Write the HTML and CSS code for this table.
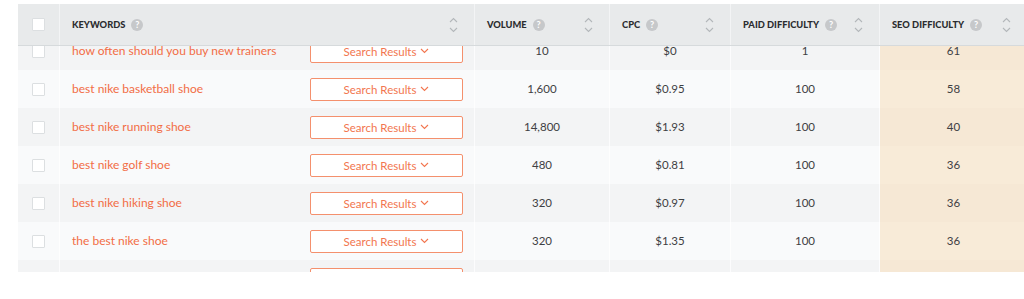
FILE: index.html
```html
<!DOCTYPE html>
<html>
<head>
<meta charset="utf-8">
<link rel="stylesheet" href="styles.css">
</head>
<body>
<div class="page">
  <div class="table">
    <div class="thead">
      <div class="th th-check"><span class="box"></span></div>
      <div class="th"><span class="label">Keywords</span><span class="help">?</span><span class="sort"><svg width="9" height="16" viewBox="0 0 9 16"><path d="M1 5 L4.5 1.5 L8 5" /><path d="M1 11 L4.5 14.5 L8 11" /></svg></span></div>
      <div class="th"><span class="label">Volume</span><span class="help">?</span><span class="sort"><svg width="9" height="16" viewBox="0 0 9 16"><path d="M1 5 L4.5 1.5 L8 5" /><path d="M1 11 L4.5 14.5 L8 11" /></svg></span></div>
      <div class="th"><span class="label">CPC</span><span class="help">?</span><span class="sort"><svg width="9" height="16" viewBox="0 0 9 16"><path d="M1 5 L4.5 1.5 L8 5" /><path d="M1 11 L4.5 14.5 L8 11" /></svg></span></div>
      <div class="th"><span class="label">Paid Difficulty</span><span class="help">?</span><span class="sort"><svg width="9" height="16" viewBox="0 0 9 16"><path d="M1 5 L4.5 1.5 L8 5" /><path d="M1 11 L4.5 14.5 L8 11" /></svg></span></div>
      <div class="th"><span class="label">SEO Difficulty</span><span class="help">?</span><span class="sort"><svg width="9" height="16" viewBox="0 0 9 16"><path d="M1 5 L4.5 1.5 L8 5" /><path d="M1 11 L4.5 14.5 L8 11" /></svg></span></div>
    </div>
    <div class="tbody-clip">
      <div class="tbody">
        <div class="tr alt">
          <div class="td td-check"><span class="box"></span></div>
          <div class="td td-kw"><span class="kw">how often should you buy new trainers</span><span class="btn">Search Results<svg width="9" height="6" viewBox="0 0 9 6"><path d="M1 1 L4.5 4.5 L8 1" /></svg></span></div>
          <div class="td num">10</div>
          <div class="td num">$0</div>
          <div class="td num">1</div>
          <div class="td num seo">61</div>
        </div>
        <div class="tr">
          <div class="td td-check"><span class="box"></span></div>
          <div class="td td-kw"><span class="kw">best nike basketball shoe</span><span class="btn">Search Results<svg width="9" height="6" viewBox="0 0 9 6"><path d="M1 1 L4.5 4.5 L8 1" /></svg></span></div>
          <div class="td num">1,600</div>
          <div class="td num">$0.95</div>
          <div class="td num">100</div>
          <div class="td num seo">58</div>
        </div>
        <div class="tr alt">
          <div class="td td-check"><span class="box"></span></div>
          <div class="td td-kw"><span class="kw">best nike running shoe</span><span class="btn">Search Results<svg width="9" height="6" viewBox="0 0 9 6"><path d="M1 1 L4.5 4.5 L8 1" /></svg></span></div>
          <div class="td num">14,800</div>
          <div class="td num">$1.93</div>
          <div class="td num">100</div>
          <div class="td num seo">40</div>
        </div>
        <div class="tr">
          <div class="td td-check"><span class="box"></span></div>
          <div class="td td-kw"><span class="kw">best nike golf shoe</span><span class="btn">Search Results<svg width="9" height="6" viewBox="0 0 9 6"><path d="M1 1 L4.5 4.5 L8 1" /></svg></span></div>
          <div class="td num">480</div>
          <div class="td num">$0.81</div>
          <div class="td num">100</div>
          <div class="td num seo">36</div>
        </div>
        <div class="tr alt">
          <div class="td td-check"><span class="box"></span></div>
          <div class="td td-kw"><span class="kw">best nike hiking shoe</span><span class="btn">Search Results<svg width="9" height="6" viewBox="0 0 9 6"><path d="M1 1 L4.5 4.5 L8 1" /></svg></span></div>
          <div class="td num">320</div>
          <div class="td num">$0.97</div>
          <div class="td num">100</div>
          <div class="td num seo">36</div>
        </div>
        <div class="tr">
          <div class="td td-check"><span class="box"></span></div>
          <div class="td td-kw"><span class="kw">the best nike shoe</span><span class="btn">Search Results<svg width="9" height="6" viewBox="0 0 9 6"><path d="M1 1 L4.5 4.5 L8 1" /></svg></span></div>
          <div class="td num">320</div>
          <div class="td num">$1.35</div>
          <div class="td num">100</div>
          <div class="td num seo">36</div>
        </div>
        <div class="tr alt">
          <div class="td td-check"><span class="box"></span></div>
          <div class="td td-kw"><span class="kw">best nike shoe for walking</span><span class="btn">Search Results<svg width="9" height="6" viewBox="0 0 9 6"><path d="M1 1 L4.5 4.5 L8 1" /></svg></span></div>
          <div class="td num">260</div>
          <div class="td num">$1.10</div>
          <div class="td num">100</div>
          <div class="td num seo">36</div>
        </div>
      </div>
    </div>
  </div>
</div>
</body>
</html>
```

FILE: styles.css
```css
html, body {
  margin: 0;
  padding: 0;
  background: #ffffff;
  overflow: hidden;
}

.page {
  padding: 4px 0 0 18px;
  width: 1024px;
  height: 299px;
  box-sizing: border-box;
  overflow: hidden;
  font-family: Lato, "Open Sans", Arial, sans-serif;
}

.table {
  width: 1009px;
}

.thead {
  display: grid;
  grid-template-columns: 42px 415px 135px 121px 149px 147px;
  height: 42px;
  background: #e8eaeb;
  border-bottom: 1px solid #d6dadc;
  box-sizing: border-box;
  position: relative;
  z-index: 1;
}

.th {
  display: flex;
  align-items: center;
  padding: 0 16px 0 12px;
  border-right: 1px solid #f3f4f5;
  box-sizing: border-box;
}

.th:last-child {
  border-right: none;
}

.th-check {
  justify-content: center;
  padding: 0;
}

.label {
  font-size: 9.3px;
  font-weight: 900;
  color: #2b2d2f;
  text-transform: uppercase;
  letter-spacing: 0;
}

.help {
  display: inline-flex;
  align-items: center;
  justify-content: center;
  width: 12px;
  height: 12px;
  border-radius: 50%;
  background: #c6c8ca;
  color: #ffffff;
  font-size: 9px;
  font-weight: 700;
  margin-left: 6px;
}

.sort {
  margin-left: auto;
  display: flex;
}

.sort svg path {
  fill: none;
  stroke: #b3b7ba;
  stroke-width: 1.1;
}

.box {
  display: block;
  width: 13px;
  height: 13px;
  background: #ffffff;
  border: 1px solid #dcdfe1;
  border-radius: 1px;
  box-sizing: border-box;
}

.tbody-clip {
  height: 226px;
  overflow: hidden;
}

.tbody {
  margin-top: -14px;
}

.tr {
  display: grid;
  grid-template-columns: 42px 415px 135px 121px 149px 147px;
  height: 38px;
  background: #f9fafb;
}

.tr.alt {
  background: #f3f4f5;
}

.td {
  display: flex;
  align-items: center;
  border-right: 1px solid rgba(255, 255, 255, 0.75);
  box-sizing: border-box;
  font-size: 11.5px;
  color: #3e4043;
}

.td:last-child {
  border-right: none;
}

.td-check {
  justify-content: center;
}

.td-kw {
  justify-content: space-between;
  padding: 0 11px 0 12px;
}

.kw {
  color: #f26d45;
  font-size: 12px;
  margin-top: -2px;
}

.btn {
  display: flex;
  align-items: center;
  justify-content: center;
  gap: 4px;
  width: 153px;
  height: 23px;
  box-sizing: border-box;
  border: 1px solid #f4906d;
  border-radius: 2px;
  background: #ffffff;
  color: #f2764f;
  font-size: 11.5px;
}

.btn svg path {
  fill: none;
  stroke: #f2764f;
  stroke-width: 1.1;
}

.num {
  justify-content: center;
  padding-bottom: 2px;
}

.seo {
  background: #f8ebd8;
}

.tr.alt .seo {
  background: #f6e8d5;
}
```
